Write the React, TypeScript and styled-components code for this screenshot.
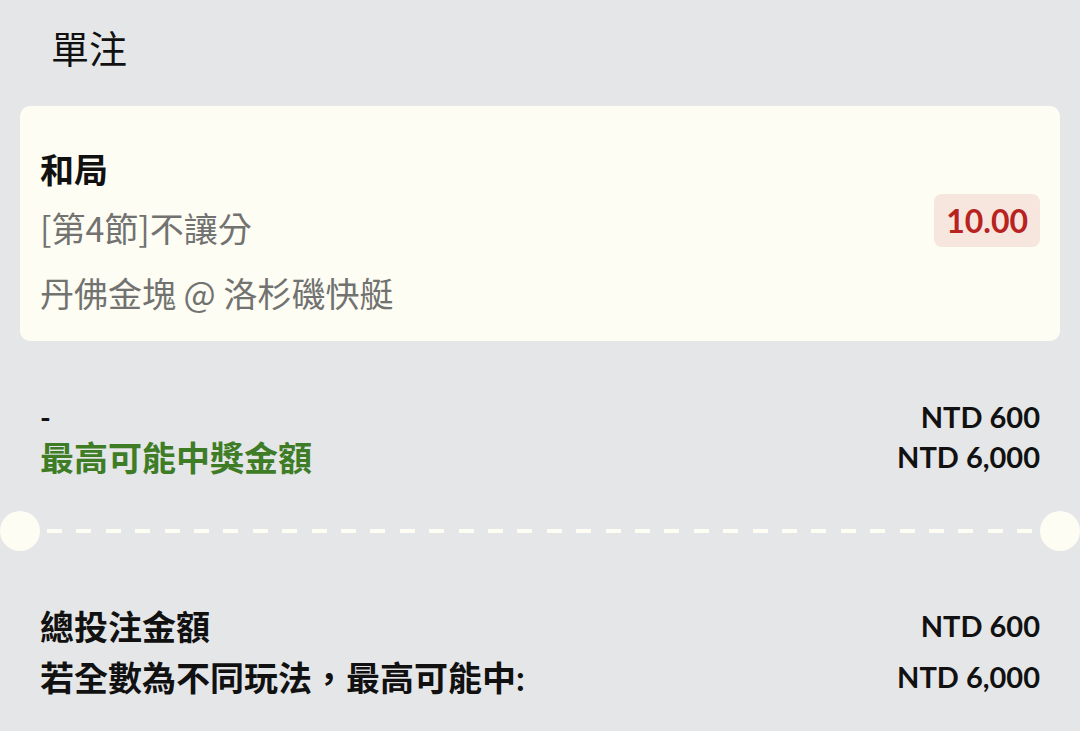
import React from "react";
import styled, { createGlobalStyle } from "styled-components";

const GlobalStyle = createGlobalStyle`
  html, body {
    margin: 0;
    padding: 0;
    background: #e5e6e8;
  }
  body {
    font-family: "Lato", "Noto Sans CJK TC", "Noto Sans", sans-serif;
    color: #111;
  }
`;

const Page = styled.div`
  width: 1080px;
  min-height: 731px;
  background: #e5e6e8;
  overflow: hidden;
`;

const Title = styled.h1`
  margin: 0;
  padding: 22px 0 0 51px;
  font-family: "Noto Sans CJK TC", sans-serif;
  font-size: 38px;
  line-height: 50px;
  font-weight: 400;
  color: #111;
`;

const Card = styled.div`
  margin: 34px 20px 0;
  padding: 40px 20px 24px;
  background: #fdfdf4;
  border-radius: 10px;
  display: flex;
  align-items: flex-start;
  justify-content: space-between;
`;

const CardInfo = styled.div`
  display: flex;
  flex-direction: column;
`;

const Selection = styled.div`
  font-size: 34px;
  line-height: 48px;
  font-weight: 700;
  color: #111;
`;

const InfoLine = styled.div<{ $gap: number }>`
  margin-top: ${(p) => p.$gap}px;
  font-family: "Noto Sans CJK TC", sans-serif;
  font-size: 34px;
  line-height: 48px;
  font-weight: 400;
  color: #727270;
`;

const Odds = styled.div`
  margin-top: 48px;
  padding: 0 12px;
  height: 53px;
  border-radius: 8px;
  background: #f6e6de;
  color: #b8221f;
  font-size: 32px;
  font-weight: 700;
  display: flex;
  align-items: center;
`;

const Summary = styled.div<{ $top: number; $row: number }>`
  margin-top: ${(p) => p.$top}px;
  padding: 0 40px;
  display: grid;
  grid-template-columns: 1fr auto;
  grid-auto-rows: ${(p) => p.$row}px;
  align-items: center;
`;

const Label = styled.div<{ $green?: boolean }>`
  font-size: 34px;
  font-weight: 700;
  color: ${(p) => (p.$green ? "#3e7d26" : "#111")};
`;

const Dash = styled.div`
  font-size: 29px;
  font-weight: 700;
  line-height: 1;
  color: #111;
`;

const Amount = styled.div`
  font-size: 29px;
  font-weight: 700;
  text-align: right;
  color: #111;
`;

const Divider = styled.div`
  margin-top: 35px;
  display: flex;
  align-items: center;
  height: 40px;
`;

const Hole = styled.div`
  width: 40px;
  height: 40px;
  border-radius: 50%;
  background: #fdfdf4;
  flex-shrink: 0;
`;

const DashLine = styled.div`
  flex: 1;
  margin: 0 7px;
  height: 4px;
  background: repeating-linear-gradient(
    to right,
    #fdfdf4 0,
    #fdfdf4 15px,
    transparent 15px,
    transparent 29.4px
  );
`;

export default function App() {
  return (
    <Page>
      <GlobalStyle />
      <Title>單注</Title>
      <Card>
        <CardInfo>
          <Selection>和局</Selection>
          <InfoLine $gap={10}>[第4節]不讓分</InfoLine>
          <InfoLine $gap={17}>丹佛金塊 @ 洛杉磯快艇</InfoLine>
        </CardInfo>
        <Odds>10.00</Odds>
      </Card>
      <Summary $top={55} $row={40}>
        <Dash>-</Dash>
        <Amount>NTD 600</Amount>
        <Label $green>最高可能中獎金額</Label>
        <Amount>NTD 6,000</Amount>
      </Summary>
      <Divider>
        <Hole />
        <DashLine />
        <Hole />
      </Divider>
      <Summary $top={49} $row={51}>
        <Label>總投注金額</Label>
        <Amount>NTD 600</Amount>
        <Label>若全數為不同玩法，最高可能中:</Label>
        <Amount>NTD 6,000</Amount>
      </Summary>
    </Page>
  );
}
